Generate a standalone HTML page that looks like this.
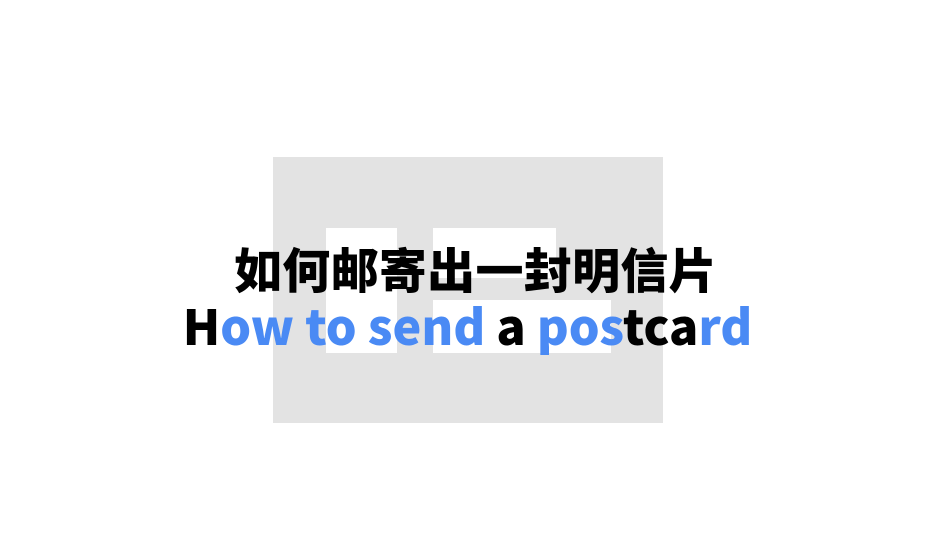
<!DOCTYPE html>
<html><head><meta charset="utf-8"><style>
html,body{margin:0;padding:0;background:#fff;width:945px;height:553px;overflow:hidden;position:relative}
.g{position:absolute;left:273px;top:157px;width:390px;height:266px;background:#e3e3e3}
.w{position:absolute;background:#fff}
.t{position:absolute;left:0;width:945px;text-align:center;white-space:nowrap;font-family:"Noto Sans CJK SC",sans-serif;font-weight:900}
.cn{top:237px;font-size:48px;line-height:60px;color:#000;left:3px;letter-spacing:0.3px}
.en{top:294px;font-size:48.5px;line-height:60px;color:#000;left:-5px}
.b{color:#4a8af4}
</style></head><body>
<div class="g"></div>
<div class="w" style="left:326px;top:228px;width:71px;height:125px"></div>
<div class="w" style="left:433px;top:228px;width:123px;height:50px"></div>
<div class="w" style="left:433px;top:300px;width:178px;height:53px"></div>
<div class="t cn">如何邮寄出一封明信片</div>
<div class="t en">H<span class="b">ow to send</span> a <span class="b">pos</span>tca<span class="b">rd</span></div>
</body></html>
